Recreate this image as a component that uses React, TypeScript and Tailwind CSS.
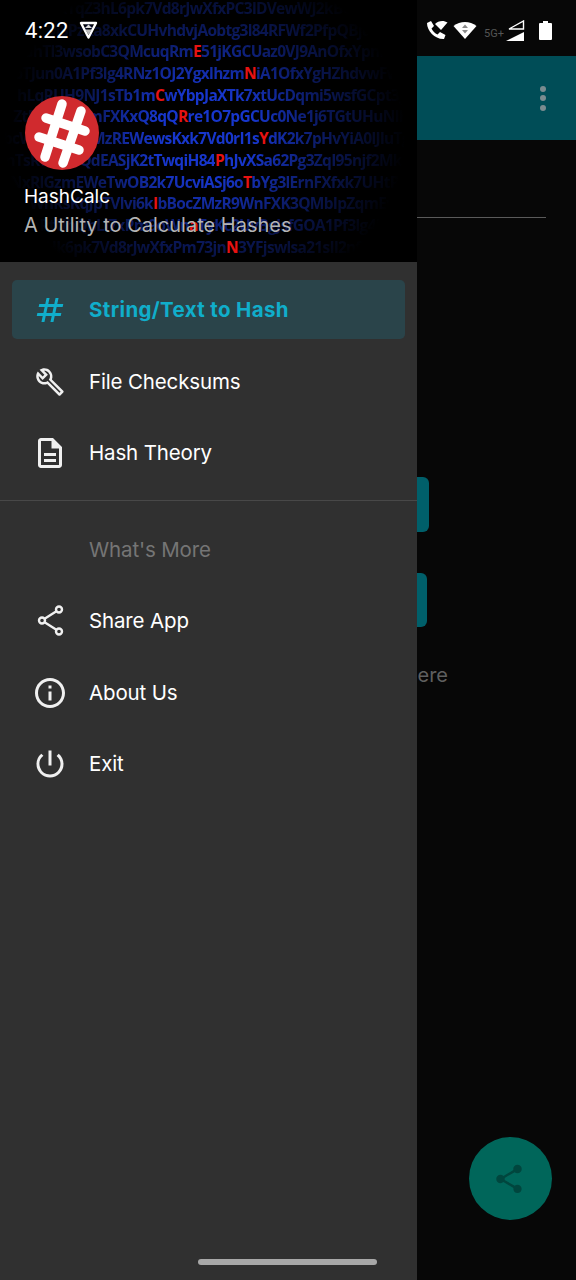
import React from "react";
import { MdOutlineBuild, MdOutlineDescription, MdInfoOutline, MdPowerSettingsNew, MdTag, MdShare } from "react-icons/md";

const codeRows: { x: string; left: string; red: string; right: string }[] = [
  { x: "w-[118px]", left: "bfRlnI9wkTqZ3hL", red: "", right: "6pk7Vd8rJwXfxPC3lDVewWJ2kBUOlDNdfGhQsT" },
  { x: "w-[110px]", left: "qTgYt3nM8PzRa8", red: "", right: "xkCUHvhdvjAobtg3l84RFWf2PfpQBjdHHkLmZnRt" },
  { x: "w-[193px]", left: "RlGhTl3wsobC3QMcuqRm", red: "E", right: "51jKGCUaz0VJ9AnOfxYpnlHvTgRsKm" },
  { x: "w-[244px]", left: "bTJun0A1Pf3lg4RNz1OJ2Ygxlhzm", red: "N", right: "iA1OfxYgHZhdvwFwQpLk" },
  { x: "w-[155px]", left: "hLqRUH9NJ1sTb1m", red: "C", right: "wYbpJaXTk7xtUcDqmi5wsfGCpt3gLmNoQr" },
  { x: "w-[178px]", left: "ZtPdcYgK3mFXKxQ8qQ", red: "R", right: "re1O7pGCUc0Ne1j6TGtUHuNlKpQsRw" },
  { x: "w-[259px]", left: "QxTbcWvHnlbcZMzREWewsKxk7Vd0rI1s", red: "Y", right: "dK2k7pHvYiA0lJluTgWq" },
  { x: "w-[215px]", left: "mTsRwhLnQdEASjK2tTwqiH84", red: "P", right: "hJvXSa62Pg3ZqI95njf2MkLsTb" },
  { x: "w-[243px]", left: "bNxRlGzmEWeTwOB2k7UcviASj6o", red: "T", right: "bYg3lErnFXfxk7UHtPqRsLm" },
  { x: "w-[153px]", left: "WnRsKqJpTVlvi6k", red: "I", right: "bBocZMzR9WnFXK3QMbIpZqmEwHsJkLn" },
  { x: "w-[189px]", left: "LzVbRtUhQbLi7xPm9oWn", red: "a", right: "TyKc2UvBgJsfGOA1Pf3lg4RNz1OJ2Y" },
  { x: "w-[226px]", left: "JwRtdNHk6pk7Vd8rJwXfxPm73jn", red: "N", right: "3YFjswlsa21sIl2nfJ6NsLpQHk" },
];

function Item({ icon, label, active }: { icon: React.ReactNode; label: string; active?: boolean }) {
  return (
    <div className={`h-[59px] mx-[12px] mt-[12px] flex items-center rounded-[5px] ${active ? "bg-[#2a444a]" : ""}`}>
      <div className={`w-[77px] pl-[20px] flex items-center ${active ? "text-[#10aecb]" : "text-[#f0f0f0]"}`}>{icon}</div>
      <span className={`pt-[2px] text-[20.5px] ${active ? "font-bold tracking-[0.35px] text-[#10aecb]" : "tracking-[-0.15px] text-white"}`}>{label}</span>
    </div>
  );
}

function Logo() {
  return (
    <svg width="76" height="76" viewBox="23 95 76 76" className="block" aria-hidden="true">
      <circle cx="61" cy="133" r="37" fill="#d02a2e" />
      <g stroke="#ffffff" strokeWidth="9.5" strokeLinecap="round" fill="none">
        <line x1="61" y1="104" x2="44" y2="157" />
        <line x1="80" y1="111" x2="62" y2="163" />
        <line x1="45" y1="118" x2="84" y2="131" />
        <line x1="38" y1="137" x2="78" y2="150" />
      </g>
    </svg>
  );
}

function StatusBar() {
  return (
    <div className="absolute left-0 top-0 z-30 w-[576px] h-[60px] flex items-center pl-[25px] pr-[24px] text-white">
      <span className="text-[22px] tracking-[0.3px] [font-family:Roboto,sans-serif]">4:22</span>
      <svg width="19" height="18" viewBox="0 0 19 18" className="ml-[10px]" aria-hidden="true">
        <path d="M2 2 H17 L9.5 16.5 Z" fill="none" stroke="#fff" strokeWidth="2.4" strokeLinejoin="round" />
        <path d="M6 7 L9.5 3.5 L13 7 Z" fill="#ddd" />
        <path d="M6 8.5 H13 L9.5 13.5 Z" fill="#bbb" />
      </svg>
      <div className="flex-1" />
      <svg width="22" height="20" viewBox="0 0 22 20" aria-hidden="true">
        <path d="M1 3 L5 1 L8 6 L5.5 8.5 C6.5 11 9 13.5 11.5 14.5 L14 12 L19.5 15 L18 19 C9 19.5 1 11 1 3 Z" fill="#fff" />
        <path d="M9 4 C12 0.5 18 0 21.5 2.5 L15 10 Z" fill="#fff" />
      </svg>
      <svg width="24" height="18" viewBox="0 0 24 18" className="ml-[5px]" aria-hidden="true">
        <path d="M0.5 5 C7 -0.5 17 -0.5 23.5 5 L12 18 Z" fill="#fff" />
        <path d="M9 7 L12 3.5 L15 7 Z" fill="#8a8a8a" />
        <path d="M9 9 H15 L12 12.5 Z" fill="#8a8a8a" />
      </svg>
      <span className="ml-[7px] mt-[8px] text-[11px] text-[#555555] [font-family:Roboto,sans-serif]">5G+</span>
      <svg width="19" height="21" viewBox="0 0 19 21" className="ml-[2px]" aria-hidden="true">
        <path d="M17.5 1 V9 H3 Z" fill="none" stroke="#fff" strokeWidth="1.4" />
        <path d="M18 12 V21 H0 Z" fill="#fff" />
      </svg>
      <svg width="13" height="19" viewBox="0 0 13 19" className="ml-[14px]" aria-hidden="true">
        <path d="M4 0 H9 V2 H12 Q13 2 13 3 V18 Q13 19 12 19 H1 Q0 19 0 18 V3 Q0 2 1 2 H4 Z" fill="#fff" />
      </svg>
    </div>
  );
}

export default function App() {
  return (
    <div className="relative w-[576px] h-[1280px] overflow-hidden bg-[#070707] [font-family:Inter,sans-serif]">
      {/* dimmed page beneath the drawer */}
      <div className="pt-[56px] flex flex-col">
        <div className="h-[84px] bg-[#004d57] flex items-center justify-end pr-[30px]">
          <div className="flex flex-col gap-[3.5px]">
            <div className="w-[6px] h-[6px] rounded-full bg-[#7a8c90]" />
            <div className="w-[6px] h-[6px] rounded-full bg-[#7a8c90]" />
            <div className="w-[6px] h-[6px] rounded-full bg-[#7a8c90]" />
          </div>
        </div>
        <div className="mt-[77px] h-[1px] w-[546px] bg-[#5a5a5a]" />
        <div className="mt-[259px] h-[55px] w-[429px] rounded-[6px] bg-[#005f6a]" />
        <div className="mt-[41px] h-[54px] w-[427px] rounded-[6px] bg-[#005f6a]" />
        <div className="mt-[36px] w-[448px] text-right text-[20px] leading-[24px] text-[#5f5f5f]">here</div>
        <div className="mt-[450px] ml-[469px] w-[83px] h-[83px] rounded-full bg-[#00665a] flex items-center justify-center text-[#00463e]">
          <MdShare size={34} className="-ml-[3px]" />
        </div>
      </div>

      {/* navigation drawer */}
      <div className="absolute left-0 top-0 w-[417px] h-[1280px] bg-[#303030] flex flex-col">
        <div className="relative h-[262px] bg-black overflow-hidden shrink-0">
          <div className="flex flex-col -mt-[2px] [font-family:'Open_Sans',sans-serif] font-bold text-[#1736cc] text-[15.5px] leading-[21.7px] tracking-[-0.7px]">
            {codeRows.map((r, i) => (
              <div key={i} className="flex whitespace-nowrap h-[21.7px]">
                <div className={`${r.x} shrink-0 overflow-hidden flex justify-end`}><span className="shrink-0 blur-[0.4px]">{r.left}</span></div>
                <span className="relative z-10 text-[#e81212] shrink-0">{r.red}</span>
                <span className="shrink-0 blur-[0.4px]">{r.right}</span>
              </div>
            ))}
          </div>
          <div className="absolute inset-0 bg-[radial-gradient(ellipse_200px_175px_at_205px_135px,rgba(0,0,0,0)_25%,rgba(0,0,0,0.55)_60%,rgba(0,0,0,1)_100%)]" />
          <div className="absolute left-[24px] top-[95px] z-20"><Logo /></div>
          <div className="absolute left-[24px] top-[184px] z-20 text-[19px] leading-[26px] text-white">HashCalc</div>
          <div className="absolute left-[24px] top-[212px] z-20 text-[20px] leading-[26px] text-[#b4b4b4]">A Utility to Calculate Hashes</div>
        </div>
        <div className="pt-[6px]">
          <Item active label="String/Text to Hash" icon={<MdTag size={36} className="-skew-x-12" />} />
          <div className="h-[1px]" />
          <Item label="File Checksums" icon={<MdOutlineBuild size={30} className="ml-[3px]" />} />
          <Item label="Hash Theory" icon={<MdOutlineDescription size={36} />} />
        </div>
        <div className="mt-[18px] h-[1px] bg-[#484848]" />
        <div className="mt-[19px] h-[59px] pt-[2px] pl-[89px] flex items-center text-[20.5px] tracking-[-0.15px] text-[#757575]">What's More</div>
        <Item label="Share App" icon={
          <svg width="36" height="36" viewBox="0 0 36 36" fill="none" stroke="currentColor" strokeWidth="2.4" aria-hidden="true">
            <circle cx="27" cy="6.5" r="3" /><circle cx="10" cy="17.5" r="3" /><circle cx="27" cy="28.5" r="3" />
            <path d="M12.6 15.8 L24.4 8.2 M12.6 19.2 L24.4 26.8" />
          </svg>
        } />
        <div className="h-[1px]" />
        <Item label="About Us" icon={<MdInfoOutline size={36} />} />
        <Item label="Exit" icon={<MdPowerSettingsNew size={36} />} />
      </div>
      <div className="absolute left-[198px] top-[1259px] w-[179px] h-[6px] rounded-full bg-[#a8a8a8]" />

      <StatusBar />
    </div>
  );
}
